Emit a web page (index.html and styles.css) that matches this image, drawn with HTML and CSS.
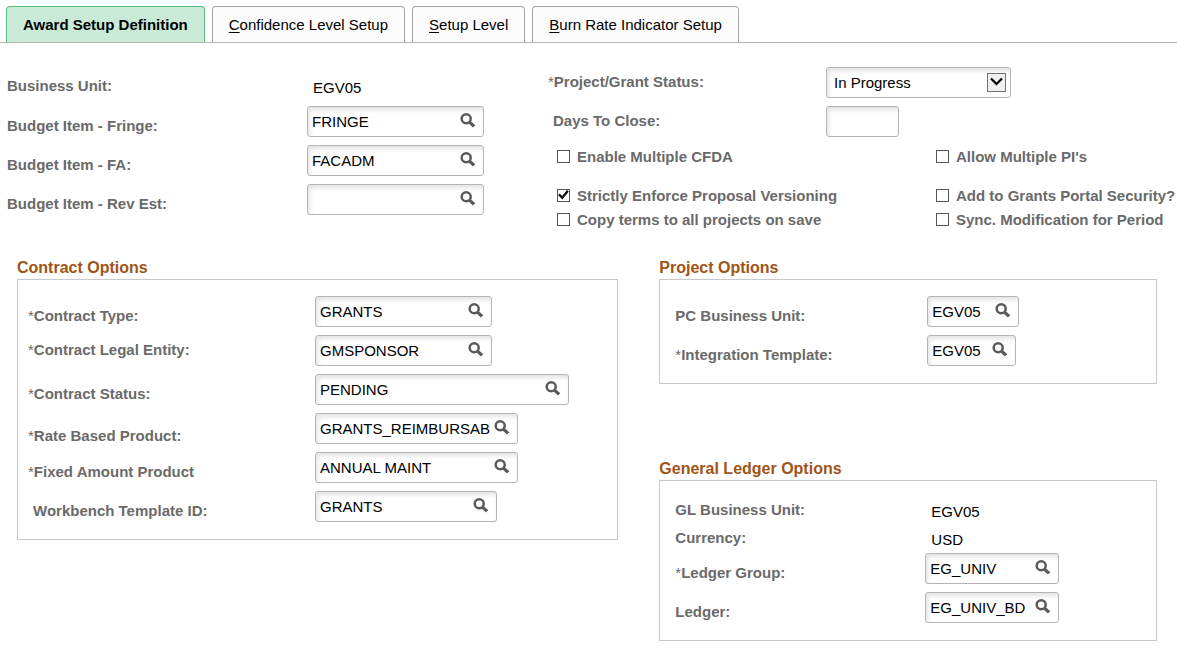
FILE: index.html
```
<!DOCTYPE html>
<html lang="en">
<head>
    <meta charset="UTF-8">
    <meta name="viewport" content="width=device-width, initial-scale=1.0">
    <title>Award Setup Definition</title>
    <link rel="stylesheet" href="styles.css">
</head>
<body>
    <!-- Shared search icon -->
    <svg class="sprite" width="0" height="0" aria-hidden="true">
        <symbol id="search" viewBox="0 0 15 15">
            <circle cx="6.2" cy="5.8" r="4.5" fill="none" stroke="#5a5a5a" stroke-width="2.5"/>
            <path d="M9.2 8.8L14 13.3" stroke="#5a5a5a" stroke-width="3.2"/>
        </symbol>
    </svg>

    <nav class="tabs">
        <button class="tab active">Award Setup Definition</button>
        <button class="tab"><u>C</u>onfidence Level Setup</button>
        <button class="tab"><u>S</u>etup Level</button>
        <button class="tab"><u>B</u>urn Rate Indicator Setup</button>
    </nav>

    <form class="page">
        <div class="general">
            <div class="general-left">
                <div class="row row-text">
                    <span class="label label-high">Business Unit:</span>
                    <span class="value">EGV05</span>
                </div>
                <div class="row">
                    <label class="label" for="fringe">Budget Item - Fringe:</label>
                    <div class="lookup size-m">
                        <input type="text" id="fringe" value="FRINGE">
                        <button type="button" aria-label="Look up"><svg><use href="#search"/></svg></button>
                    </div>
                </div>
                <div class="row">
                    <label class="label" for="fa">Budget Item - FA:</label>
                    <div class="lookup size-m">
                        <input type="text" id="fa" value="FACADM">
                        <button type="button" aria-label="Look up"><svg><use href="#search"/></svg></button>
                    </div>
                </div>
                <div class="row">
                    <label class="label" for="rev-est">Budget Item - Rev Est:</label>
                    <div class="lookup size-m">
                        <input type="text" id="rev-est" value="">
                        <button type="button" aria-label="Look up"><svg><use href="#search"/></svg></button>
                    </div>
                </div>
            </div>

            <div class="general-right">
                <div class="row">
                    <label class="label label-high" for="status"><span class="star">*</span>Project/Grant Status:</label>
                    <div class="select">
                        <select id="status">
                            <option>In Progress</option>
                            <option>Closed</option>
                        </select>
                        <svg class="arrow" viewBox="0 0 19 19">
                            <rect x="0.5" y="0.5" width="18" height="18" fill="#f0f0f0" stroke="#707070"/>
                            <path d="M4 5.5L9.5 11L15 5.5" fill="none" stroke="#000" stroke-width="2.2"/>
                        </svg>
                    </div>
                </div>
                <div class="row">
                    <label class="label label-high indent" for="days">Days To Close:</label>
                    <input class="textbox" type="text" id="days">
                </div>
                <div class="checks checks-first">
                    <label class="check"><input type="checkbox"><span>Enable Multiple CFDA</span></label>
                    <label class="check"><input type="checkbox"><span>Allow Multiple PI's</span></label>
                </div>
                <div class="checks">
                    <label class="check"><input type="checkbox" checked><span>Strictly Enforce Proposal Versioning</span></label>
                    <label class="check"><input type="checkbox"><span>Add to Grants Portal Security?</span></label>
                    <label class="check"><input type="checkbox"><span>Copy terms to all projects on save</span></label>
                    <label class="check"><input type="checkbox"><span>Sync. Modification for Period</span></label>
                </div>
            </div>
        </div>

        <div class="options">
            <section class="contract">
                <h2>Contract Options</h2>
                <div class="panel">
                    <div class="row">
                        <label class="label" for="contract-type"><span class="star">*</span>Contract Type:</label>
                        <div class="lookup size-m">
                            <input type="text" id="contract-type" value="GRANTS">
                            <button type="button" aria-label="Look up"><svg><use href="#search"/></svg></button>
                        </div>
                    </div>
                    <div class="row">
                        <label class="label label-high" for="legal-entity"><span class="star">*</span>Contract Legal Entity:</label>
                        <div class="lookup size-m">
                            <input type="text" id="legal-entity" value="GMSPONSOR">
                            <button type="button" aria-label="Look up"><svg><use href="#search"/></svg></button>
                        </div>
                    </div>
                    <div class="row">
                        <label class="label" for="contract-status"><span class="star">*</span>Contract Status:</label>
                        <div class="lookup size-xl">
                            <input type="text" id="contract-status" value="PENDING">
                            <button type="button" aria-label="Look up"><svg><use href="#search"/></svg></button>
                        </div>
                    </div>
                    <div class="row">
                        <label class="label label-low" for="rate-product"><span class="star">*</span>Rate Based Product:</label>
                        <div class="lookup size-l">
                            <input type="text" id="rate-product" value="GRANTS_REIMBURSAB">
                            <button type="button" aria-label="Look up"><svg><use href="#search"/></svg></button>
                        </div>
                    </div>
                    <div class="row">
                        <label class="label" for="fixed-product"><span class="star">*</span>Fixed Amount Product</label>
                        <div class="lookup size-l">
                            <input type="text" id="fixed-product" value="ANNUAL MAINT">
                            <button type="button" aria-label="Look up"><svg><use href="#search"/></svg></button>
                        </div>
                    </div>
                    <div class="row">
                        <label class="label indent" for="workbench">Workbench Template ID:</label>
                        <div class="lookup size-ml">
                            <input type="text" id="workbench" value="GRANTS">
                            <button type="button" aria-label="Look up"><svg><use href="#search"/></svg></button>
                        </div>
                    </div>
                </div>
            </section>

            <div class="side">
                <section class="project">
                    <h2>Project Options</h2>
                    <div class="panel">
                        <div class="row">
                            <label class="label" for="pc-unit">PC Business Unit:</label>
                            <div class="lookup size-s">
                                <input type="text" id="pc-unit" value="EGV05">
                                <button type="button" aria-label="Look up"><svg><use href="#search"/></svg></button>
                            </div>
                        </div>
                        <div class="row">
                            <label class="label" for="template"><span class="star">*</span>Integration Template:</label>
                            <div class="lookup size-xs">
                                <input type="text" id="template" value="EGV05">
                                <button type="button" aria-label="Look up"><svg><use href="#search"/></svg></button>
                            </div>
                        </div>
                    </div>
                </section>

                <section class="ledger">
                    <h2>General Ledger Options</h2>
                    <div class="panel">
                        <div class="row row-text">
                            <span class="label label-high">GL Business Unit:</span>
                            <span class="value">EGV05</span>
                        </div>
                        <div class="row row-text">
                            <span class="label label-high">Currency:</span>
                            <span class="value">USD</span>
                        </div>
                        <div class="row">
                            <label class="label" for="ledger-group"><span class="star">*</span>Ledger Group:</label>
                            <div class="lookup size-sm">
                                <input type="text" id="ledger-group" value="EG_UNIV">
                                <button type="button" aria-label="Look up"><svg><use href="#search"/></svg></button>
                            </div>
                        </div>
                        <div class="row">
                            <label class="label" for="ledger">Ledger:</label>
                            <div class="lookup size-sm">
                                <input type="text" id="ledger" value="EG_UNIV_BD">
                                <button type="button" aria-label="Look up"><svg><use href="#search"/></svg></button>
                            </div>
                        </div>
                    </div>
                </section>
            </div>
        </div>
    </form>
</body>
</html>
```
FILE: styles.css
```
* {
    box-sizing: border-box;
}
body {
    margin: 0;
    background: #fff;
    color: #000;
    font-family: "Liberation Sans", Arial, sans-serif;
    font-size: 15px;
    line-height: 17px;
}
input, select, button {
    font: inherit;
    color: inherit;
}
.sprite {
    position: absolute;
}

/* Tabs */
.tabs {
    display: flex;
    gap: 7px;
    padding: 6px 6px 0;
    border-bottom: 1px solid #b3b3b3;
}
.tab {
    height: 36px;
    padding: 0 16px;
    border: 1px solid #a6a6a6;
    border-bottom: none;
    border-radius: 4px 4px 0 0;
    background: #fcfcfc;
    white-space: nowrap;
    cursor: pointer;
}
.tab u {
    text-underline-offset: 2px;
}
.tab.active {
    background: #c8ead6;
    border-color: #58bd84;
    font-weight: bold;
}

/* Rows */
.row {
    display: flex;
    align-items: center;
    height: 31px;
    margin-bottom: 8px;
}
.row-text {
    height: 28px;
    margin-bottom: 0;
}
.label {
    flex: none;
    width: 300px;
    padding-top: 8px;
    color: #6a6a6a;
    font-weight: bold;
    white-space: nowrap;
}
.label-high {
    padding-top: 0;
    padding-bottom: 3px;
}
.label-low {
    padding-top: 14px;
}
.indent {
    padding-left: 5px;
}
.star {
    font-weight: normal;
}
.value {
    padding-left: 6px;
}

/* Fields */
.lookup, .select, .textbox {
    height: 31px;
    border: 1px solid #b5b5b5;
    border-radius: 3px;
    background: #fff;
    box-shadow: inset 2px 3px 4px #e4e4e4;
}
.lookup {
    display: flex;
    padding: 0 8px 0 4px;
}
.lookup input {
    flex: 1;
    min-width: 0;
    padding: 0;
    border: none;
    background: none;
    outline: none;
}
.lookup button {
    display: flex;
    padding: 6px 0 0;
    border: none;
    background: none;
    cursor: pointer;
}
.lookup svg {
    width: 15px;
    height: 15px;
}
.size-xs { width: 89px; }
.size-s { width: 92px; }
.size-sm { width: 134px; }
.size-m { width: 177px; }
.size-ml { width: 182px; }
.size-l { width: 203px; }
.size-xl { width: 254px; }
.textbox {
    width: 73px;
    padding: 0 4px;
    outline: none;
}
.select {
    position: relative;
    width: 185px;
}
.select select {
    width: 100%;
    height: 100%;
    padding: 0 28px 0 7px;
    border: none;
    background: none;
    outline: none;
    appearance: none;
}
.arrow {
    position: absolute;
    top: 5px;
    right: 4px;
    width: 19px;
    height: 19px;
    pointer-events: none;
}

/* General settings */
.general {
    display: flex;
    gap: 41px;
    padding: 24px 0 0 7px;
}
.general-left {
    flex: none;
    width: 500px;
    padding-top: 6px;
}
.general-left .row-text {
    margin-bottom: 5px;
}
.general-right {
    flex: 1;
}
.general-right .label {
    width: 278px;
}
.checks {
    display: grid;
    grid-template-columns: 379px 1fr;
    padding-left: 9px;
}
.checks-first {
    margin-bottom: 15px;
}
.check {
    display: flex;
    align-items: center;
    gap: 7px;
    height: 24px;
    padding-bottom: 2px;
    color: #6a6a6a;
    font-weight: bold;
    white-space: nowrap;
}
.check input {
    display: grid;
    width: 13px;
    height: 13px;
    margin: 0;
    border: 1px solid #555;
    background: #fff;
    appearance: none;
}
.check input:checked::before {
    content: "";
    width: 11px;
    height: 11px;
    background: #111;
    clip-path: polygon(0 50%, 16% 36%, 38% 58%, 82% 4%, 98% 18%, 40% 92%);
}

/* Option panels */
.options {
    display: grid;
    grid-template-columns: 29fr 24fr;
    gap: 41px;
    align-items: start;
    padding: 27px 20px 0 17px;
}
h2 {
    margin: 0 0 2px;
    color: #a05416;
    font-size: 16px;
    line-height: 18px;
}
.panel {
    padding: 16px 0 9px 15px;
    border: 1px solid #c8c8c8;
}
.contract .panel {
    padding-left: 10px;
}
.contract .label {
    width: 287px;
}
.project .label {
    width: 252px;
}
.ledger .label {
    width: 250px;
}
.ledger {
    margin-top: 76px;
}
```
